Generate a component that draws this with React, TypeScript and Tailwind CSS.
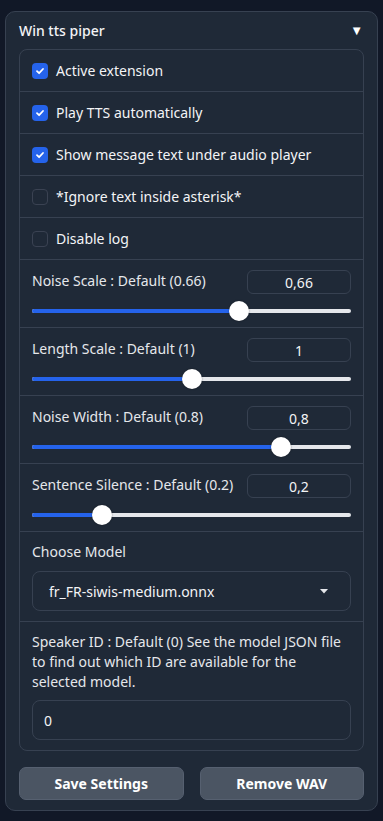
const checks = [
  { label: "Active extension", on: true },
  { label: "Play TTS automatically", on: true },
  { label: "Show message text under audio player", on: true },
  { label: "*Ignore text inside asterisk*", on: false },
  { label: "Disable log", on: false },
];

const sliders = [
  { label: "Noise Scale : Default (0.66)", value: "0,66", frac: 0.66 },
  { label: "Length Scale : Default (1)", value: "1", frac: 0.5 },
  { label: "Noise Width : Default (0.8)", value: "0,8", frac: 0.8 },
  { label: "Sentence Silence : Default (0.2)", value: "0,2", frac: 0.2 },
];

function Check({ on }: { on: boolean }) {
  if (!on) {
    return <span className="w-4 h-4 rounded-[4px] border border-[#3a4252] bg-[#1f2937] shrink-0" />;
  }
  return (
    <span className="w-4 h-4 rounded-[4px] bg-[#2563eb] flex items-center justify-center shrink-0">
      <svg width="10" height="10" viewBox="0 0 10 10" fill="none">
        <path d="M2 5.2 4.1 7.2 8 3" stroke="white" strokeWidth="1.8" strokeLinecap="round" strokeLinejoin="round" />
      </svg>
    </span>
  );
}

function Slider({ frac }: { frac: number }) {
  // thumb is 20px, track width matches the thumb travel of a native range input
  return (
    <div className="relative h-5 mt-[7px]">
      <div className="absolute left-0 right-0 top-[8px] h-[4px] rounded-full bg-[#e5e7eb]" />
      <div
        className="absolute left-0 top-[8px] h-[4px] rounded-full bg-[#2563eb]"
        style={{ width: `calc(10px + (100% - 20px) * ${frac})` }}
      />
      <div
        className="absolute top-0 w-5 h-5 rounded-full bg-white shadow-[0_0_2px_rgba(0,0,0,0.4)]"
        style={{ left: `calc((100% - 20px) * ${frac})` }}
      />
    </div>
  );
}

export default function App() {
  return (
    <div
      className="min-h-screen bg-[#111827] pt-[11px] px-[5px] pb-[9px] text-[#e5e7eb]"
      style={{ fontFamily: '"Noto Sans", "Open Sans", sans-serif' }}
    >
      <div className="border border-[#374151] rounded-[10px] bg-[#1f2937] px-[13px] pb-[10px]">
        {/* header */}
        <div className="h-[37px] flex items-center justify-between">
          <span className="text-[14px] font-medium text-[#f3f4f6]">Win tts piper</span>
          <span className="text-[13px] text-white mr-[1px]">▼</span>
        </div>

        {/* settings box */}
        <div className="border border-[#374151] rounded-[8px]">
          {checks.map((c) => (
            <div key={c.label} className="h-[42px] flex items-center gap-[8px] px-[12px] border-b border-[#374151]">
              <Check on={c.on} />
              <span className="text-[14px] text-[#f3f4f6]">{c.label}</span>
            </div>
          ))}

          {sliders.map((s) => (
            <div key={s.label} className="h-[68px] px-[12px] pt-[10px] border-b border-[#374151]">
              <div className="flex items-center justify-between">
                <span className="text-[14px] text-[#e5e7eb] -mt-[4px]">{s.label}</span>
                <div className="w-[104px] h-[24px] border border-[#374151] rounded-[6px] flex items-center justify-center text-[14px] text-[#f3f4f6]">
                  {s.value}
                </div>
              </div>
              <Slider frac={s.frac} />
            </div>
          ))}

          <div className="h-[90px] px-[12px] pt-[10px] border-b border-[#374151]">
            <div className="text-[14px] text-[#e5e7eb] leading-[20px]">Choose Model</div>
            <div className="mt-[9px] h-[40px] border border-[#374151] rounded-[8px] flex items-center justify-between pl-[16px] pr-[22px]">
              <span className="text-[14px] text-[#f3f4f6]">fr_FR-siwis-medium.onnx</span>
              <svg width="8" height="5" viewBox="0 0 8 5">
                <path d="M0 0h8L4 4.5z" fill="#e5e7eb" />
              </svg>
            </div>
          </div>

          <div className="px-[12px] pt-[10px] pb-[10px]">
            <div className="text-[14px] text-[#e5e7eb] leading-[20px]">
              Speaker ID : Default (0) See the model JSON file to find out which ID are available for the selected model.
            </div>
            <div className="mt-[8px] h-[40px] border border-[#374151] rounded-[8px] flex items-center px-[11px] text-[14px] text-[#f3f4f6]">
              0
            </div>
          </div>
        </div>

        {/* buttons */}
        <div className="mt-[16px] grid grid-cols-2 gap-[16px]">
          <button className="h-[33px] rounded-[7px] bg-[#4b5563] border border-[#566070] text-[14px] font-bold text-white">
            Save Settings
          </button>
          <button className="h-[33px] rounded-[7px] bg-[#4b5563] border border-[#566070] text-[14px] font-bold text-white">
            Remove WAV
          </button>
        </div>
      </div>
    </div>
  );
}
